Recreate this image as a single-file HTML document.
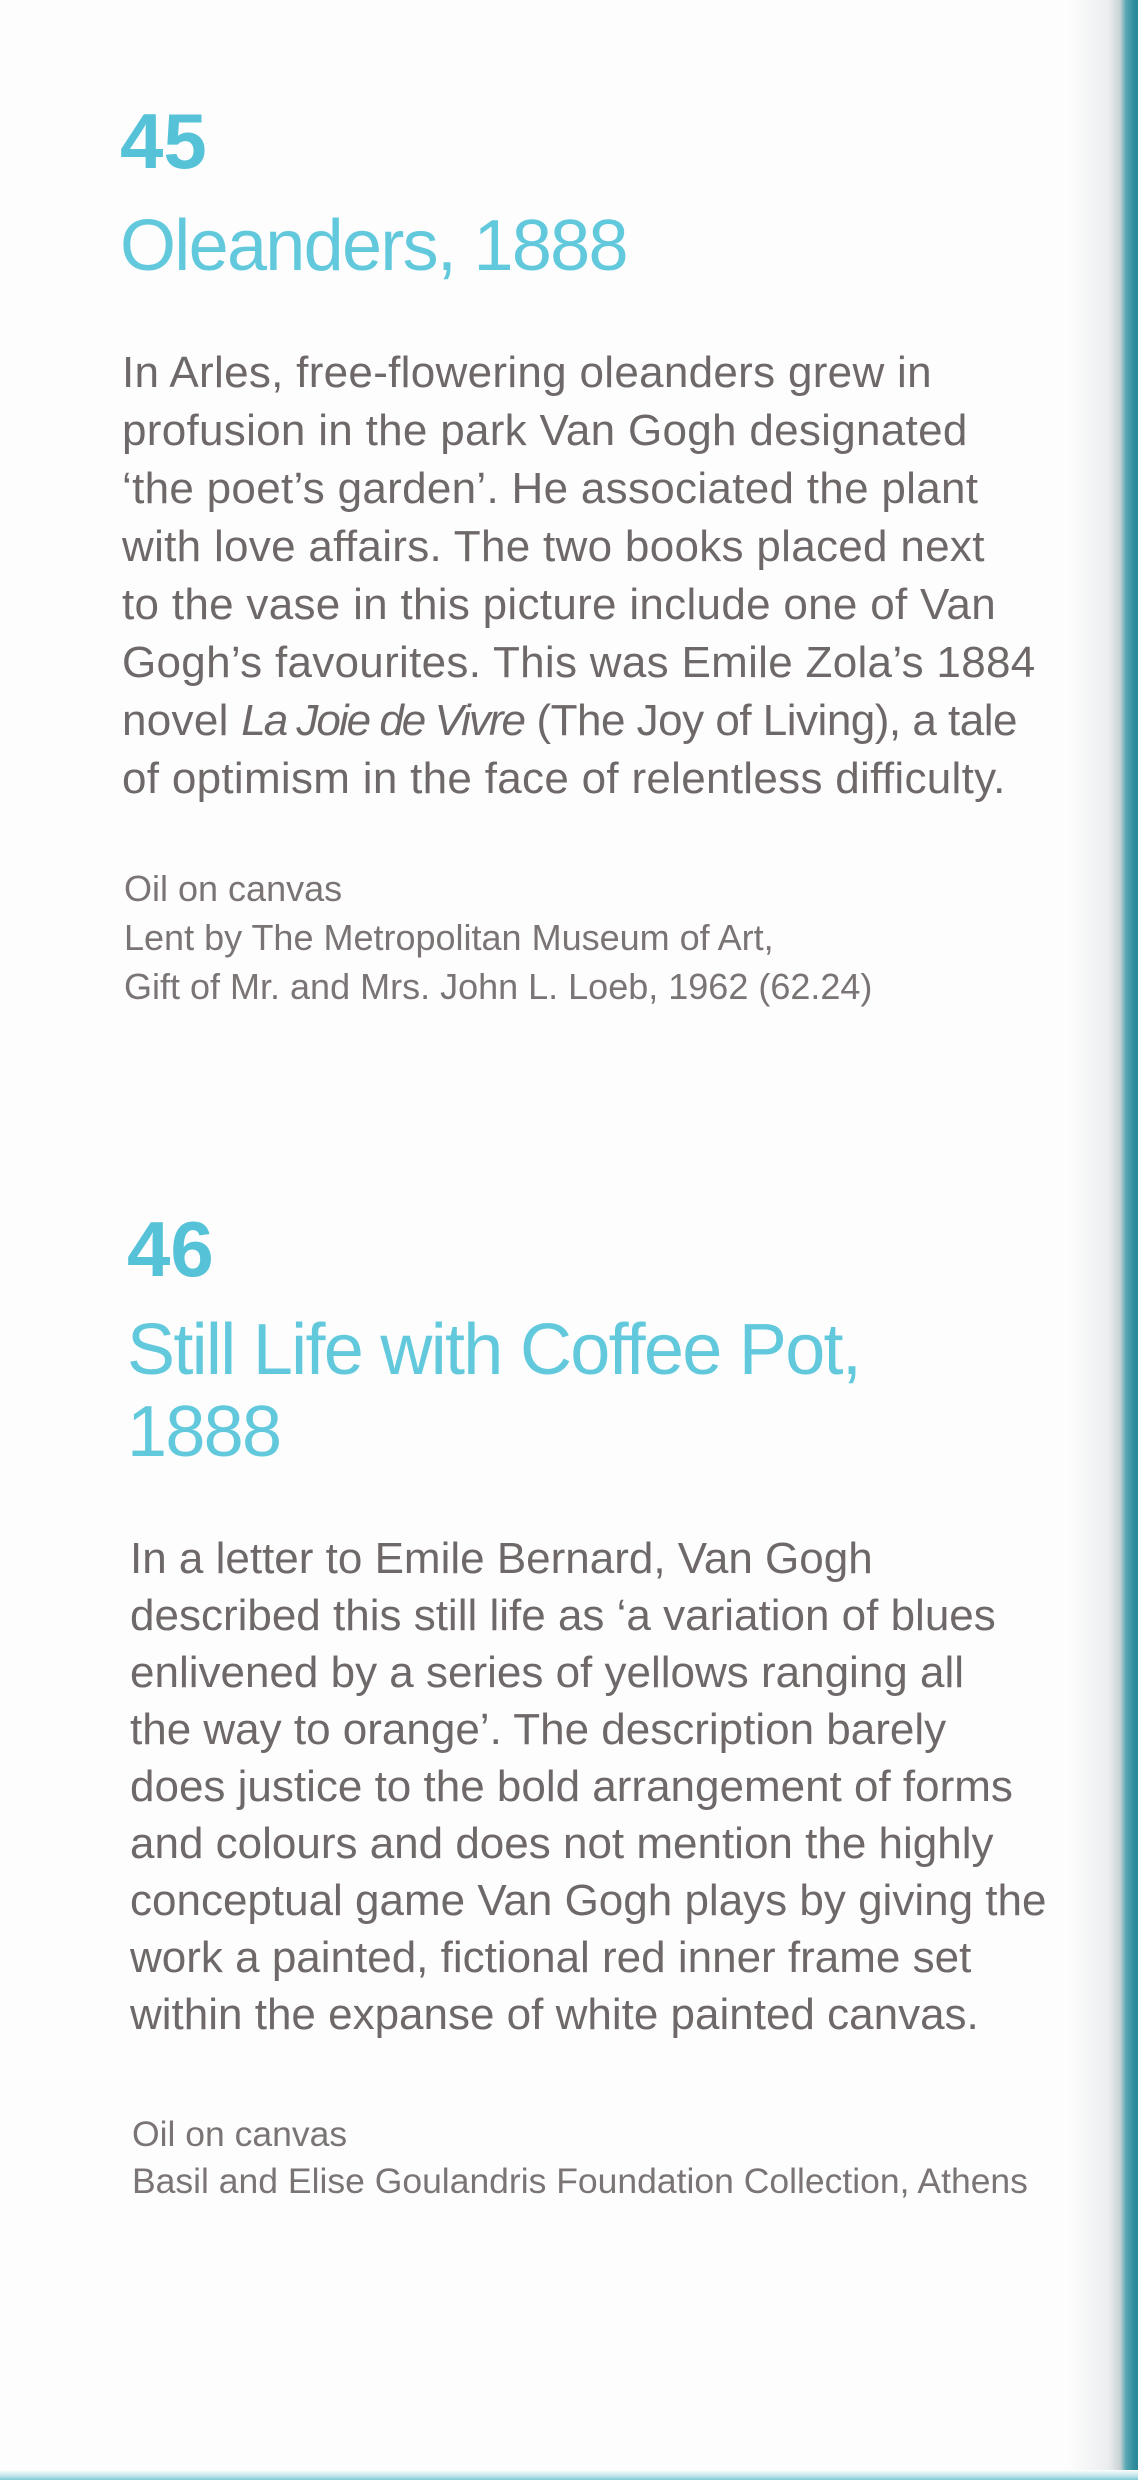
<!DOCTYPE html>
<html><head><meta charset="utf-8"><style>
html,body{margin:0;padding:0;}
body{width:1138px;height:2480px;position:relative;overflow:hidden;background:#fdfdfd;font-family:"Liberation Sans",sans-serif;}
.a{position:absolute;white-space:nowrap;}
.num{font-size:78px;line-height:80px;font-weight:bold;color:#55c2d8;}
.ttl{font-size:72px;line-height:82px;color:#62c9dd;letter-spacing:-1.7px;}
.body{font-size:44px;line-height:58px;color:#6e6968;letter-spacing:0.3px;}
.body i{letter-spacing:-2px;}
.cr{font-size:36px;line-height:49px;color:#7a7574;}
.edge{position:absolute;top:0;right:0;width:70px;height:2480px;background:linear-gradient(to right,rgba(255,255,255,0) 0,rgba(225,228,230,0.6) 40px,#c9d3d6 52px,#5aa8b4 58px,#2f8d9c 66px,#2a8796 70px);}
.bot{position:absolute;left:0;bottom:0;width:1138px;height:10px;background:linear-gradient(to bottom,#fdfdfd,#bfe3ea 60%,#7cc9d6);}
</style></head><body>
<div class="edge"></div>
<div class="bot"></div>

<div class="a num" style="left:120px;top:101px;">45</div>
<div class="a ttl" style="left:120px;top:205px;">Oleanders, 1888</div>
<div class="a body" style="left:122px;top:344px;">In Arles, free-flowering oleanders grew in<br>profusion in the park Van Gogh designated<br>‘the poet’s garden’. He associated the plant<br>with love affairs. The two books placed next<br>to the vase in this picture include one of Van<br>Gogh’s favourites. This was Emile Zola’s 1884<br>novel <i>La Joie de Vivre</i> <span style="letter-spacing:-0.5px">(The Joy of Living), a tale</span><br>of optimism in the face of relentless difficulty.</div>
<div class="a cr" style="left:124px;top:864px;">Oil on canvas<br>Lent by The Metropolitan Museum of Art,<br>Gift of Mr. and Mrs. John L. Loeb, 1962 (62.24)</div>

<div class="a num" style="left:127px;top:1209px;">46</div>
<div class="a ttl" style="left:127px;top:1309px;">Still Life with Coffee Pot,<br>1888</div>
<div class="a body" style="left:130px;top:1530px;line-height:57px;letter-spacing:0;">In a letter to Emile Bernard, Van Gogh<br>described this still life as ‘a variation of blues<br>enlivened by a series of yellows ranging all<br>the way to orange’. The description barely<br>does justice to the bold arrangement of forms<br>and colours and does not mention the highly<br>conceptual game Van Gogh plays by giving the<br>work a painted, fictional red inner frame set<br>within the expanse of white painted canvas.</div>
<div class="a cr" style="left:132px;top:2111px;line-height:47px;font-size:35.5px;">Oil on canvas<br>Basil and Elise Goulandris Foundation Collection, Athens</div>
</body></html>
